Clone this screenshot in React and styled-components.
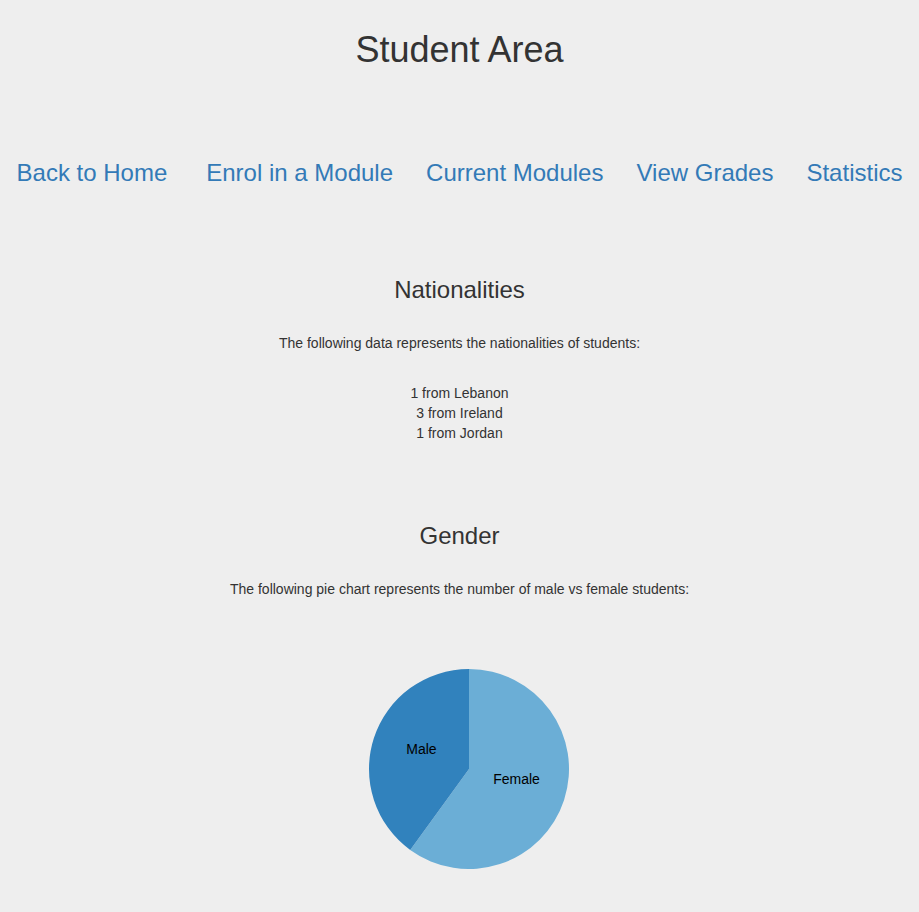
import React from "react";
import styled, { createGlobalStyle } from "styled-components";

const GlobalStyle = createGlobalStyle`
  html, body {
    margin: 0;
    padding: 0;
    background: #eeeeee;
  }
  body {
    font-family: "Liberation Sans", Arial, Helvetica, sans-serif;
    font-size: 14px;
    line-height: 20px;
    color: #333333;
  }
`;

const Page = styled.div`
  display: flex;
  flex-direction: column;
  align-items: center;
  text-align: center;
  padding-top: 30px;
  padding-bottom: 40px;
`;

const Title = styled.h1`
  margin: 0;
  font-size: 36px;
  line-height: 40px;
  font-weight: 400;
`;

const Nav = styled.nav`
  display: flex;
  justify-content: center;
  gap: 33px;
  margin-top: 90px;
`;

const NavLink = styled.a`
  font-size: 24px;
  line-height: 26px;
  color: #337ab7;
  text-decoration: none;
  margin-right: ${(p) => (p.$wide ? "6px" : "0")};
`;

const Section = styled.section`
  display: flex;
  flex-direction: column;
  align-items: center;
  margin-top: ${(p) => p.$top}px;
`;

const Heading = styled.h3`
  margin: 0;
  font-size: 24px;
  line-height: 26px;
  font-weight: 400;
`;

const Text = styled.p`
  margin: 30px 0 0;
`;

const List = styled.div`
  margin-top: 30px;
  display: flex;
  flex-direction: column;
`;

const Chart = styled.svg`
  display: block;
  margin-top: 70px;
`;

const Label = styled.text`
  font-family: "Liberation Sans", Arial, sans-serif;
  font-size: 14px;
  fill: #000;
`;

const nationalities = [
  { count: 1, name: "Lebanon" },
  { count: 3, name: "Ireland" },
  { count: 1, name: "Jordan" },
];

const links = [
  "Back to Home",
  "Enrol in a Module",
  "Current Modules",
  "View Grades",
  "Statistics",
];

function PieChart() {
  const cx = 119;
  const cy = 100;
  const r = 100;
  const male = 2;
  const female = 3;
  const a = (female / (male + female)) * Math.PI * 2;
  const ex = cx + r * Math.sin(a);
  const ey = cy - r * Math.cos(a);
  const mid = (start, end) => {
    const m = (start + end) / 2;
    return [cx + (r / 2) * Math.sin(m), cy - (r / 2) * Math.cos(m)];
  };
  const [fx, fy] = mid(0, a);
  const [mx, my] = mid(a, Math.PI * 2);

  return (
    <Chart width="219" height="200" viewBox="0 0 219 200">
      <path
        d={`M${cx},${cy} L${cx},${cy - r} A${r},${r} 0 1 1 ${ex},${ey} Z`}
        fill="#6baed6"
      />
      <path
        d={`M${cx},${cy} L${ex},${ey} A${r},${r} 0 0 1 ${cx},${cy - r} Z`}
        fill="#3182bd"
      />
      <Label x={mx} y={my} textAnchor="middle">
        Male
      </Label>
      <Label x={fx} y={fy} textAnchor="middle">
        Female
      </Label>
    </Chart>
  );
}

export default function App() {
  return (
    <>
      <GlobalStyle />
      <Page>
        <Title>Student Area</Title>

        <Nav>
          {links.map((l, i) => (
            <NavLink key={l} href="#" $wide={i === 0}>
              {l}
            </NavLink>
          ))}
        </Nav>

        <Section $top={91}>
          <Heading>Nationalities</Heading>
          <Text>The following data represents the nationalities of students:</Text>
          <List>
            {nationalities.map((n) => (
              <span key={n.name}>
                {n.count} from {n.name}
              </span>
            ))}
          </List>
        </Section>

        <Section $top={80}>
          <Heading>Gender</Heading>
          <Text>
            The following pie chart represents the number of male vs female
            students:
          </Text>
          <PieChart />
        </Section>
      </Page>
    </>
  );
}
